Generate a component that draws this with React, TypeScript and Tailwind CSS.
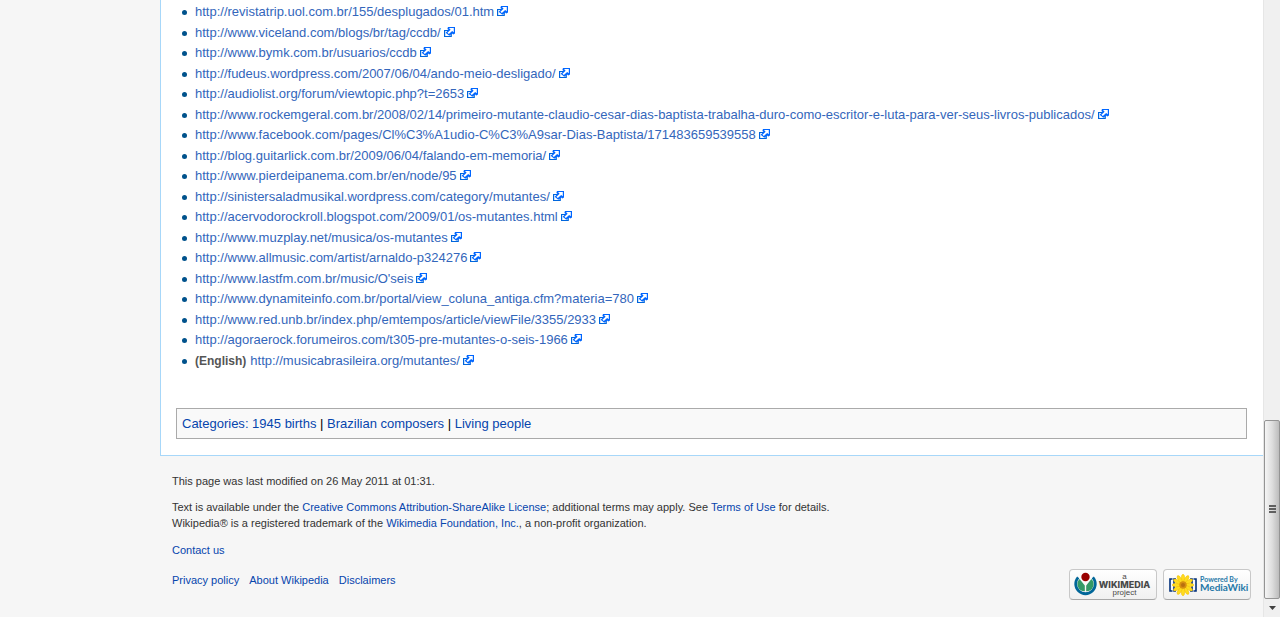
import React from 'react';

type ExternalItem = {
  url: string;
  lang?: string;
};

const externalLinks: ExternalItem[] = [
  { url: 'http://revistatrip.uol.com.br/155/desplugados/01.htm' },
  { url: 'http://www.viceland.com/blogs/br/tag/ccdb/' },
  { url: 'http://www.bymk.com.br/usuarios/ccdb' },
  { url: 'http://fudeus.wordpress.com/2007/06/04/ando-meio-desligado/' },
  { url: 'http://audiolist.org/forum/viewtopic.php?t=2653' },
  { url: 'http://www.rockemgeral.com.br/2008/02/14/primeiro-mutante-claudio-cesar-dias-baptista-trabalha-duro-como-escritor-e-luta-para-ver-seus-livros-publicados/' },
  { url: 'http://www.facebook.com/pages/Cl%C3%A1udio-C%C3%A9sar-Dias-Baptista/171483659539558' },
  { url: 'http://blog.guitarlick.com.br/2009/06/04/falando-em-memoria/' },
  { url: 'http://www.pierdeipanema.com.br/en/node/95' },
  { url: 'http://sinistersaladmusikal.wordpress.com/category/mutantes/' },
  { url: 'http://acervodorockroll.blogspot.com/2009/01/os-mutantes.html' },
  { url: 'http://www.muzplay.net/musica/os-mutantes' },
  { url: 'http://www.allmusic.com/artist/arnaldo-p324276' },
  { url: "http://www.lastfm.com.br/music/O'seis" },
  { url: 'http://www.dynamiteinfo.com.br/portal/view_coluna_antiga.cfm?materia=780' },
  { url: 'http://www.red.unb.br/index.php/emtempos/article/viewFile/3355/2933' },
  { url: 'http://agoraerock.forumeiros.com/t305-pre-mutantes-o-seis-1966' },
  { url: 'http://musicabrasileira.org/mutantes/', lang: '(English)' },
];

const categories = ['1945 births', 'Brazilian composers', 'Living people'];

function ExternalIcon() {
  return (
    <svg className="mb-[2px] ml-[3px] shrink-0" width="11" height="10" viewBox="1 1 10 10" preserveAspectRatio="none" aria-hidden="true">
      <path d="M1.5 4.5h6v6h-6z" fill="#fff" stroke="#0066dd" strokeWidth="1.200" />
      <path d="M4.600 1H11v6.400L9.400 8.400 8.400 7.400 5.800 9.800 2.500 6.700l2.600-2.800-1-1z" fill="#0066ff" />
      <path d="M9.900 2v4.300L8.400 4.900 5.400 8 4.100 6.700 7 3.800 5.600 2z" fill="#fff" />
    </svg>
  );
}

function FooterLink({ children }: { children: React.ReactNode }) {
  return <a href="#" className="text-[#0645ad] hover:underline">{children}</a>;
}

function WikimediaLogo() {
  return (
    <svg className="shrink-0" width="23" height="25" viewBox="0 0 23 25" aria-hidden="true">
      <path d="M4.200 5.400A9.800 9.800 0 1 0 18.800 5.400" fill="none" stroke="#006699" strokeWidth="2.800" />
      <path d="M5.600 7A7.200 7.200 0 0 0 10.800 19.300V13.500z" fill="#339966" />
      <path d="M17.400 7A7.200 7.200 0 0 1 12.200 19.300V13.500z" fill="#339966" />
      <circle cx="11.500" cy="5" r="4.200" fill="#990000" />
    </svg>
  );
}

const petals = [0, 30, 60, 90, 120, 150, 180, 210, 240, 270, 300, 330];

function MediaWikiLogo() {
  return (
    <svg className="shrink-0" width="30" height="22" viewBox="0 0 30 22" aria-hidden="true">
      <path d="M4.500 5H2v12h2.500M8 5H6v12h2M22 5h2v12h-2M25.500 5H28v12h-2.500" fill="none" stroke="#002f7a" strokeWidth="1.600" />
      {petals.map((angle) => (
        <ellipse key={angle} cx="15" cy="4.700" rx="1.700" ry="4.500" fill="#ffdc1e" stroke="#f3bd00" strokeWidth="0.500" transform={`rotate(${angle} 15 11)`} />
      ))}
      <circle cx="15" cy="11" r="3.700" fill="#d69010" />
      <circle cx="15" cy="11" r="2" fill="#b87010" />
    </svg>
  );
}

function Badge({ children, label }: { children: React.ReactNode; label: string }) {
  return (
    <a
      href="#"
      aria-label={label}
      className="flex h-[31px] w-[88px] items-center rounded-[4px] border border-[#c8c8c8] border-b-[#a8a8a8] bg-linear-to-b from-white to-[#f0f0f0] px-1"
    >
      {children}
    </a>
  );
}

function ScrollBar() {
  return (
    <div className="sticky top-0 flex h-screen w-[17px] shrink-0 flex-col justify-end border-l border-[#e6e6e6] bg-[#f0f0f0]">
      <div className="flex h-[179px] flex-col items-center justify-center gap-px rounded-[2px] border border-[#949494] bg-linear-to-r from-[#f5f5f5] via-[#dedede] to-[#bcbcbc] pb-[2px]">
        <span className="h-[2px] w-[7px] bg-[#606060]" />
        <span className="h-[2px] w-[7px] bg-[#606060]" />
        <span className="h-[2px] w-[7px] bg-[#606060]" />
      </div>
      <button type="button" aria-label="Scroll down" className="flex h-[18px] items-center justify-center">
        <svg width="7" height="4" viewBox="0 0 7 4" aria-hidden="true">
          <path d="M0 0h7L3.500 4z" fill="#404040" />
        </svg>
      </button>
    </div>
  );
}

function App() {
  return (
    <div className="flex min-h-screen bg-[#f6f6f6] font-['Liberation_Sans',Arial,sans-serif]">
      <div className="min-w-0 flex-1 pl-40">
        <main className="border-b border-l border-[#a7d7f9] bg-white pt-[2px] pr-4 pb-4 pl-[15px] text-[13px]">
          <ul className="pl-[6px]">
            {externalLinks.map((item) => (
              <li key={item.url} className="flex items-center leading-[20px] odd:mb-px">
                <span className="mr-2 size-[5px] shrink-0 rounded-full bg-[#00528c]" />
                {item.lang && <span className="mr-1 text-xs font-bold text-[#555]">{item.lang}</span>}
                <a href={item.url} className="flex items-center text-[#3366bb] hover:underline">
                  {item.url}
                  <ExternalIcon />
                </a>
              </li>
            ))}
          </ul>

          <div className="mt-[37px] border border-[#aaa] bg-[#f9f9f9] px-[5px] py-[5px] leading-[19px] text-black">
            <a href="#" className="text-[#0645ad] hover:underline">Categories</a>
            <span className="text-[#0645ad]">: </span>
            {categories.map((category, i) => (
              <React.Fragment key={category}>
                {i > 0 && ' | '}
                <a href="#" className="text-[#0645ad] hover:underline">{category}</a>
              </React.Fragment>
            ))}
          </div>
        </main>

        <footer className="flex items-end justify-between pt-[17px] pr-3 pl-3 text-[11px] leading-4 text-[#333]">
          <div>
            <p>This page was last modified on 26 May 2011 at 01:31.</p>
            <p className="mt-[10px]">
              Text is available under the <FooterLink>Creative Commons Attribution-ShareAlike License</FooterLink>; additional
              terms may apply. See <FooterLink>Terms of Use</FooterLink> for details.
              <br />
              Wikipedia® is a registered trademark of the <FooterLink>Wikimedia Foundation, Inc.</FooterLink>, a non-profit
              organization.
            </p>
            <p className="mt-[11px]">
              <FooterLink>Contact us</FooterLink>
            </p>
            <div className="mt-[14px] mb-3 flex gap-[10px]">
              <FooterLink>Privacy policy</FooterLink>
              <FooterLink>About Wikipedia</FooterLink>
              <FooterLink>Disclaimers</FooterLink>
            </div>
          </div>
          <div className="flex gap-[6px]">
            <Badge label="Wikimedia Foundation">
              <WikimediaLogo />
              <span className="flex flex-1 flex-col items-center text-[8px] leading-[8px] text-[#484848]">
                <span>a</span>
                <span className="font-['Inter',sans-serif] text-[9px] font-extrabold">WIKIMEDIA</span>
                <span>project</span>
              </span>
            </Badge>
            <Badge label="Powered by MediaWiki">
              <MediaWikiLogo />
              <span className="ml-[2px] flex flex-col pb-[3px] font-['Lato',sans-serif] font-bold text-[#1f78a8]">
                <span className="text-[7px] leading-[8px]">Powered By</span>
                <span className="text-[10px] leading-[9px]">MediaWiki</span>
              </span>
            </Badge>
          </div>
        </footer>
      </div>
      <ScrollBar />
    </div>
  );
}

export default App;
